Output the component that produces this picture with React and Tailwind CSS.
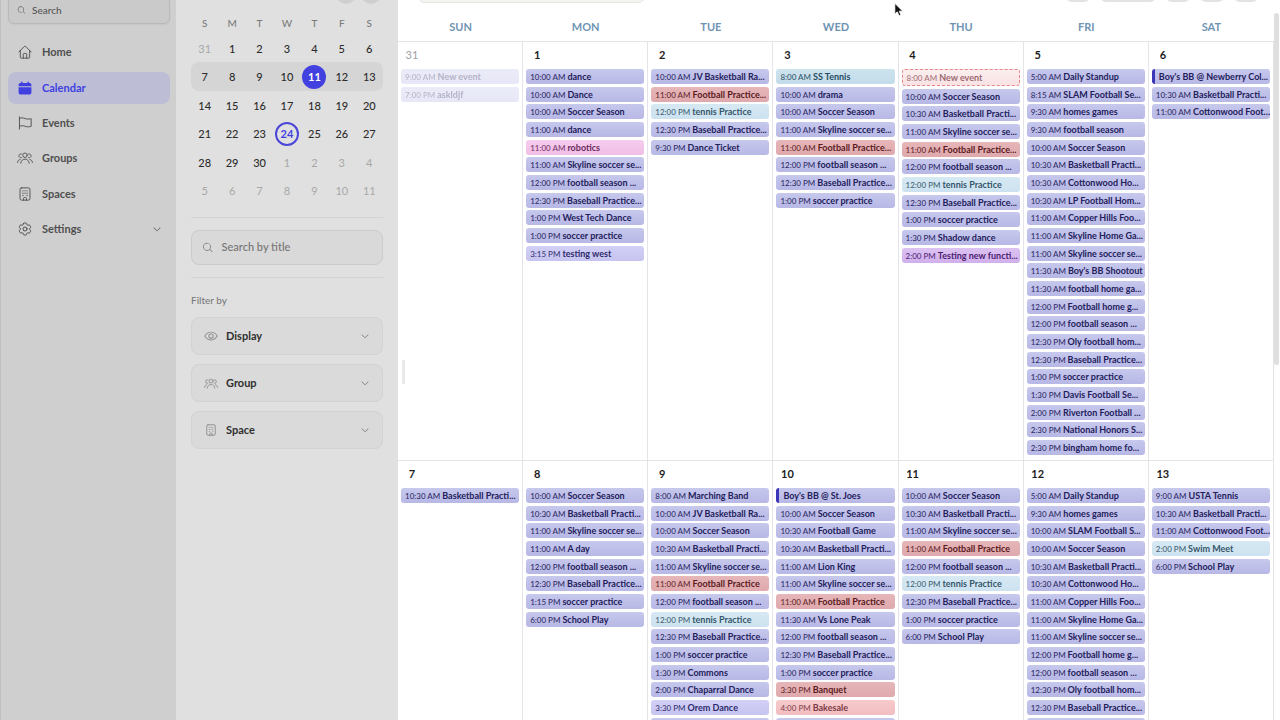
import React from "react";
import {
  PiMagnifyingGlass,
  PiEye,
  PiCaretDown,
  PiCaretLeft,
  PiCaretRight,
} from "react-icons/pi";
import { HiOutlineCog6Tooth } from "react-icons/hi2";

function HomeIcon({ className }) {
  return (
    <svg viewBox="0 0 24 24" fill="none" stroke="currentColor" strokeWidth="1.6" strokeLinecap="round" strokeLinejoin="round" className={className} aria-hidden="true">
      <path d="M1.5 12 10.600 2.600a2 2 0 0 1 2.800 0L22.500 12" />
      <path d="M4 9.500V21a1.500 1.500 0 0 0 1.500 1.500h13A1.500 1.500 0 0 0 20 21V9.500" />
      <path d="M9 22.500V16a1.500 1.500 0 0 1 1.500-1.500h3A1.500 1.500 0 0 1 15 16v6.500" />
    </svg>
  );
}

function CalendarIcon({ className }) {
  return (
    <svg viewBox="0 0 24 24" fill="currentColor" className={className} aria-hidden="true">
      <path d="M6.500 1a1.300 1.300 0 0 1 1.300 1.300V3.500h8.400V2.300a1.300 1.300 0 0 1 2.600 0V3.500H20a3 3 0 0 1 3 3V9H1V6.500a3 3 0 0 1 3-3h1.200V2.300A1.300 1.300 0 0 1 6.500 1Z" />
      <path d="M1 10.800h22V20a3 3 0 0 1-3 3H4a3 3 0 0 1-3-3Z" />
    </svg>
  );
}

function FlagIcon({ className }) {
  return (
    <svg viewBox="0 0 24 24" fill="none" stroke="currentColor" strokeWidth="1.6" strokeLinecap="round" strokeLinejoin="round" className={className} aria-hidden="true">
      <path d="M2.500 1.500v21" />
      <path d="M2.500 4c3-1 6-1.200 9.500.3s7 1.200 10.500.2v13.300c-3.500 1-7 1.200-10.500-.2s-6.500-1.100-9.500 0" />
    </svg>
  );
}

function GroupIcon({ className }) {
  return (
    <svg viewBox="0 0 32 24" fill="none" stroke="currentColor" strokeWidth="1.8" strokeLinecap="round" strokeLinejoin="round" className={className} aria-hidden="true">
      <circle cx="16" cy="6.500" r="4.500" />
      <path d="M7.500 22.500c.3-5 3.800-8.200 8.500-8.200s8.200 3.200 8.500 8.200" />
      <path d="M8.800 11.500A4 4 0 1 1 9 3.800" />
      <path d="M23.200 11.500A4 4 0 1 0 23 3.800" />
      <path d="M1.200 21c.1-3.200 1.800-5.600 5-6" />
      <path d="M30.800 21c-.1-3.200-1.800-5.600-5-6" />
    </svg>
  );
}

function BuildingIcon({ className }) {
  return (
    <svg viewBox="0 0 24 24" fill="none" stroke="currentColor" strokeWidth="1.6" strokeLinecap="round" strokeLinejoin="round" className={className} aria-hidden="true">
      <rect x="3.500" y="1.500" width="17" height="21" rx="2.500" />
      <path d="M9.500 22.500v-3a1.500 1.500 0 0 1 1.500-1.500h2a1.500 1.500 0 0 1 1.500 1.500v3" />
      <path d="M8.500 6.500h.01M12 6.500h.01M15.500 6.500h.01M8.500 10.500h.01M12 10.500h.01M15.500 10.500h.01M8.500 14.500h.01M15.500 14.500h.01" strokeWidth="2.200" />
    </svg>
  );
}

const NAV = [
  { label: "Home", Icon: HomeIcon },
  { label: "Calendar", Icon: CalendarIcon, active: true },
  { label: "Events", Icon: FlagIcon },
  { label: "Groups", Icon: GroupIcon, size: "h-3 w-4" },
  { label: "Spaces", Icon: BuildingIcon },
  { label: "Settings", Icon: HiOutlineCog6Tooth, size: "size-4", menu: true },
];

function Sidebar() {
  return (
    <aside className="w-44 shrink-0 overflow-hidden border-l border-[#bfbfbf] bg-[#cfcfcf] pr-[6px] pl-[7px]">
      <label className="-mt-1 flex h-7 items-center gap-[6px] rounded-md border border-[#b9b9b9] bg-[#cacaca] pl-2 text-[#5c5c5c] shadow-xs">
        <PiMagnifyingGlass className="size-[10px]" aria-hidden="true" />
        <input
          type="search"
          aria-label="Search"
          placeholder="Search"
          className="w-full min-w-0 bg-transparent text-[10px] font-medium outline-none placeholder:text-[#555]"
        />
      </label>
      <nav className="mt-3">
        {NAV.map(({ label, Icon, active, size = "size-[14px]", menu }) => (
          <a
            key={label}
            href="#"
            aria-current={active ? "page" : undefined}
            className={
              "mb-[3px] flex h-8 items-center rounded-lg px-2 text-[11px] font-bold [&:nth-child(3n+1)]:mb-1 " +
              (active ? "bg-[#bdbed6] text-[#4040e0]" : "text-[#4f4f4f]")
            }
          >
            <span className="flex w-[18px] justify-center">
              <Icon className={"shrink-0 " + size} aria-hidden="true" />
            </span>
            <span className="ml-2 flex-1">{label}</span>
            {menu && <PiCaretDown className="size-[10px]" aria-hidden="true" />}
          </a>
        ))}
      </nav>
    </aside>
  );
}

const MONTH = [
  [-31, 1, 2, 3, 4, 5, 6],
  [7, 8, 9, 10, 11, 12, 13],
  [14, 15, 16, 17, 18, 19, 20],
  [21, 22, 23, 24, 25, 26, 27],
  [28, 29, 30, -1, -2, -3, -4],
  [-5, -6, -7, -8, -9, -10, -11],
];

function dayClass(day) {
  if (day === 11) return "bg-[#4340e0] font-bold text-white";
  if (day === 24) return "border-2 border-[#4a46d8] font-bold text-[#4340e0]";
  if (day < 0) return "text-[#a8a8a8]";
  return "font-medium text-[#2b2b2b]";
}

function MiniCalendar() {
  return (
    <table className="w-full table-fixed border-separate border-spacing-0 text-center text-[11px]">
      <thead>
        <tr className="h-[21px] text-[10px] text-[#7b7b7b]">
          {["S", "M", "T", "W", "T", "F", "S"].map((d, i) => (
            <th key={i} className="p-0 font-medium">{d}</th>
          ))}
        </tr>
      </thead>
      <tbody>
        {MONTH.map((week, w) => (
          <tr key={w} className="h-7 even:h-[29px]">
            {week.map((day) => (
              <td
                key={day}
                className={"p-0 " + (w === 1 ? "bg-[#d5d5d5] first:rounded-l-lg last:rounded-r-lg" : "")}
              >
                <button type="button" className={"size-6 rounded-full leading-none " + dayClass(day)}>
                  {Math.abs(day)}
                </button>
              </td>
            ))}
          </tr>
        ))}
      </tbody>
    </table>
  );
}

const FILTERS = [
  { label: "Display", Icon: PiEye, size: "size-[14px]" },
  { label: "Group", Icon: GroupIcon, size: "h-[11px] w-[14px]" },
  { label: "Space", Icon: BuildingIcon, size: "h-3 w-[14px]" },
];

function FilterPanel() {
  return (
    <section className="w-[222px] shrink-0 overflow-hidden bg-[#e0e0e0] pr-[15px] pl-[15px]">
      <div className="-mt-4 flex justify-end gap-[5px] pr-[2px]">
        <button type="button" aria-label="Previous month" className="flex size-5 items-center justify-center rounded-full bg-[#cfcfcf]">
          <PiCaretLeft className="size-2" />
        </button>
        <button type="button" aria-label="Next month" className="flex size-5 items-center justify-center rounded-full bg-[#cfcfcf]">
          <PiCaretRight className="size-2" />
        </button>
      </div>
      <div className="mt-[9px]">
        <MiniCalendar />
      </div>
      <hr className="mt-3 border-[#d3d3d3]" />
      <label className="mt-3 flex h-[35px] items-center gap-2 rounded-lg border border-[#cbcbcb] bg-[#d9d9d9] pl-[10px] text-[#757575]">
        <PiMagnifyingGlass className="size-[13px]" aria-hidden="true" />
        <input
          type="search"
          aria-label="Search by title"
          placeholder="Search by title"
          className="w-full min-w-0 bg-transparent text-[11px] font-medium outline-none placeholder:text-[#757575]"
        />
      </label>
      <hr className="mt-3 border-[#d3d3d3]" />
      <h2 className="mt-[14px] text-[10px] leading-4 font-medium text-[#7b7b7b]">Filter by</h2>
      <div className="mt-[9px] flex flex-col gap-[9px]">
        {FILTERS.map(({ label, Icon, size }) => (
          <button
            key={label}
            type="button"
            className="flex h-[38px] items-center rounded-lg border border-[#d2d2d2] bg-[#dadada] px-3 text-left text-[11px] font-bold text-[#2f2f2f]"
          >
            <Icon className={"text-[#858585] " + size} aria-hidden="true" />
            <span className="ml-2 flex-1">{label}</span>
            <PiCaretDown className="size-[10px] text-[#757575]" aria-hidden="true" />
          </button>
        ))}
      </div>
    </section>
  );
}

const TONES = {
  indigo: "pl-1 from-[#c6c8ec] to-[#b8b8e6] text-[#22205a]",
  lilac: "pl-1 from-[#d2d0f6] to-[#c6c4f0] text-[#2d2a6a]",
  red: "pl-1 from-[#e6b6b8] to-[#dfa9ad] text-[#5a1a22]",
  rose: "pl-1 from-[#f6cacb] to-[#f2bdc2] text-[#7a3a44]",
  sky: "pl-1 from-[#d6e9f3] to-[#cde2f0] text-[#35566a]",
  tennis: "pl-1 from-[#cde3ee] to-[#c3dbea] text-[#254c60]",
  pink: "pl-1 from-[#f6cdee] to-[#f1bde6] text-[#6a2a5c]",
  purple: "pl-1 from-[#dcc2f2] to-[#d0b0ec] text-[#4c2170]",
  allday: "pl-1 border-l-[3px] border-[#3b35b8] from-[#c6c8ec] to-[#b8b8e6] text-[#22205a]",
  draft: "pl-1 border border-dashed border-[#e8858d] from-[#fbeeee] to-[#f9e2e4] text-[#9a6c72]",
};

const BP = "Basketball Practi...";
const BB = "12:30 PM|Baseball Practice...";
const SKY = "11:00 AM|Skyline soccer se...";
const FS = "12:00 PM|football season ...";
const SS = "10:00 AM|Soccer Season";
const SP = "1:00 PM|soccer practice";
const PLAY = "6:00 PM|School Play";

const WEEKS = [
  [
    { day: 31, muted: true, events: ["9:00 AM|New event", "7:00 PM|askldjf"] },
    {
      day: 1,
      events: ["10:00 AM|dance", "10:00 AM|Dance", SS, "11:00 AM|dance", "11:00 AM|robotics|pink", SKY, FS, BB, "1:00 PM|West Tech Dance", SP, "3:15 PM|testing west|lilac"],
    },
    {
      day: 2,
      events: ["10:00 AM|JV Basketball Ra...", "11:00 AM|Football Practice...|red", "12:00 PM|tennis Practice|sky", BB, "9:30 PM|Dance Ticket"],
    },
    {
      day: 3,
      events: ["8:00 AM|SS Tennis|tennis", "10:00 AM|drama", SS, SKY, "11:00 AM|Football Practice...|red", FS, BB, SP],
    },
    {
      day: 4,
      events: ["8:00 AM|New event|draft", SS, "10:30 AM|" + BP, SKY, "11:00 AM|Football Practice...|red", FS, "12:00 PM|tennis Practice|sky", BB, SP, "1:30 PM|Shadow dance", "2:00 PM|Testing new functi...|purple"],
    },
    {
      day: 5,
      events: [
        "5:00 AM|Daily Standup", "8:15 AM|SLAM Football Se...", "9:30 AM|homes games", "9:30 AM|football season", SS, "10:30 AM|" + BP,
        "10:30 AM|Cottonwood Ho...", "10:30 AM|LP Football Hom...", "11:00 AM|Copper Hills Foo...", "11:00 AM|Skyline Home Ga...", SKY,
        "11:30 AM|Boy's BB Shootout", "11:30 AM|football home ga...", "12:00 PM|Football home g...", FS, "12:30 PM|Oly football hom...", BB, SP,
        "1:30 PM|Davis Football Se...", "2:00 PM|Riverton Football ...", "2:30 PM|National Honors S...", "2:30 PM|bingham home fo...",
      ],
    },
    { day: 6, events: ["|Boy's BB @ Newberry Col...|allday", "10:30 AM|" + BP, "11:00 AM|Cottonwood Foot..."] },
  ],
  [
    { day: 7, events: ["10:30 AM|" + BP] },
    { day: 8, events: [SS, "10:30 AM|" + BP, SKY, "11:00 AM|A day", FS, BB, "1:15 PM|soccer practice", PLAY] },
    {
      day: 9,
      events: [
        "8:00 AM|Marching Band", "10:00 AM|JV Basketball Ra...", SS, "10:30 AM|" + BP, SKY, "11:00 AM|Football Practice|red", FS,
        "12:00 PM|tennis Practice|sky", BB, SP, "1:30 PM|Commons", "2:00 PM|Chaparral Dance", "3:30 PM|Orem Dance|lilac", "|",
      ],
    },
    {
      day: 10,
      events: [
        "|Boy's BB @ St. Joes|allday", SS, "10:30 AM|Football Game", "10:30 AM|" + BP, "11:00 AM|Lion King", SKY, "11:00 AM|Football Practice|red",
        "11:30 AM|Vs Lone Peak", FS, BB, SP, "3:30 PM|Banquet|red", "4:00 PM|Bakesale|rose", "|",
      ],
    },
    { day: 11, events: [SS, "10:30 AM|" + BP, SKY, "11:00 AM|Football Practice|red", FS, "12:00 PM|tennis Practice|sky", BB, SP, PLAY] },
    {
      day: 12,
      events: [
        "5:00 AM|Daily Standup", "9:30 AM|homes games", "10:00 AM|SLAM Football S...", SS, "10:30 AM|" + BP, "10:30 AM|Cottonwood Ho...",
        "11:00 AM|Copper Hills Foo...", "11:00 AM|Skyline Home Ga...", SKY, "12:00 PM|Football home g...", FS, "12:30 PM|Oly football hom...", BB, "|",
      ],
    },
    { day: 13, events: ["9:00 AM|USTA Tennis", "10:30 AM|" + BP, "11:00 AM|Cottonwood Foot...", "2:00 PM|Swim Meet|sky", PLAY] },
  ],
];

function EventChip({ event }) {
  const [time, title, tone = "indigo"] = event.split("|");
  return (
    <li className="mb-[3px] [&:nth-child(3n+2)]:mb-[2px]">
      <button
        type="button"
        className={
          "flex w-full items-center gap-[2px] overflow-hidden rounded-[3px] bg-linear-to-b text-[9px] leading-none whitespace-nowrap " +
          (tone === "draft" ? "h-[17px] " : "h-[15px] ") +
          TONES[tone]
        }
      >
        {time && <span className="text-[8px] font-medium opacity-90">{time}</span>}
        <span className="font-bold">{title}</span>
      </button>
    </li>
  );
}

function DayCell({ day, events, muted }) {
  return (
    <div className="min-w-0 border-r border-b border-[#e4e4e8] px-[3px] pt-1 pb-[2px]">
      <div className={"mb-[5px] ml-px w-5 text-center text-[11px] leading-[18px] " + (muted ? "text-[#a0a0a0]" : "font-bold text-[#1c1c1c]")}>
        {day}
      </div>
      <ul className={muted ? "opacity-35" : ""}>
        {events.map((event, i) => (
          <EventChip key={i} event={event} />
        ))}
      </ul>
    </div>
  );
}

function Toolbar() {
  return (
    <div className="-mt-6 flex h-[27px] items-end justify-between pr-[16px] pl-[19px]">
      <input
        type="text"
        aria-label="Filter events"
        className="h-6 w-[229px] rounded-lg border border-[#e4e4e0] bg-[#f4f4f1]"
      />
      <div className="mb-px flex gap-[10px]">
        <button type="button" aria-label="Today" className="h-6 w-6 rounded-md bg-[#e3e3e3]" />
        <button type="button" aria-label="Change view" className="h-6 w-14 rounded-md bg-[#e3e3e3]" />
        <button type="button" aria-label="Previous" className="h-6 w-6 rounded-md bg-[#e3e3e3]" />
        <button type="button" aria-label="Next" className="h-6 w-6 rounded-md bg-[#e3e3e3]" />
        <button type="button" aria-label="More" className="h-6 w-6 rounded-md bg-[#e3e3e3]" />
      </div>
    </div>
  );
}

export default function App() {
  return (
    <div className="relative flex h-screen overflow-hidden bg-white font-['Lato','Open_Sans',sans-serif]">
      <Sidebar />
      <FilterPanel />
      <main className="relative flex min-w-0 flex-1 overflow-hidden">
        <div className="min-w-0 flex-1">
          <Toolbar />
          <div className="grid h-[39px] grid-cols-7 border-b border-[#e4e4e8] pt-[14px] text-center text-[11px] leading-5 font-bold text-[#6f94b4]">
            {["SUN", "MON", "TUE", "WED", "THU", "FRI", "SAT"].map((d) => (
              <div key={d}>{d}</div>
            ))}
          </div>
          {WEEKS.map((week, w) => (
            <div key={w} className="grid grid-cols-7">
              {week.map((cell) => (
                <DayCell key={cell.day} {...cell} />
              ))}
            </div>
          ))}
        </div>
        <div className="w-[6px] shrink-0 pt-[13px] pr-px">
          <div className="h-[352px] rounded-full bg-[#dfdfdf]" />
        </div>
        <div className="absolute top-1/2 left-1 h-6 w-[3px] bg-[#e9e9e9]" />
      </main>
      <svg viewBox="0 0 12 18" className="absolute top-[2px] left-[894px] h-4 w-[10px]" aria-hidden="true">
        <path d="M1 1v13l3-2.800 2 4.800 2.300-1-2-4.600h4.200Z" fill="#111" stroke="#fff" strokeWidth="1" />
      </svg>
    </div>
  );
}
